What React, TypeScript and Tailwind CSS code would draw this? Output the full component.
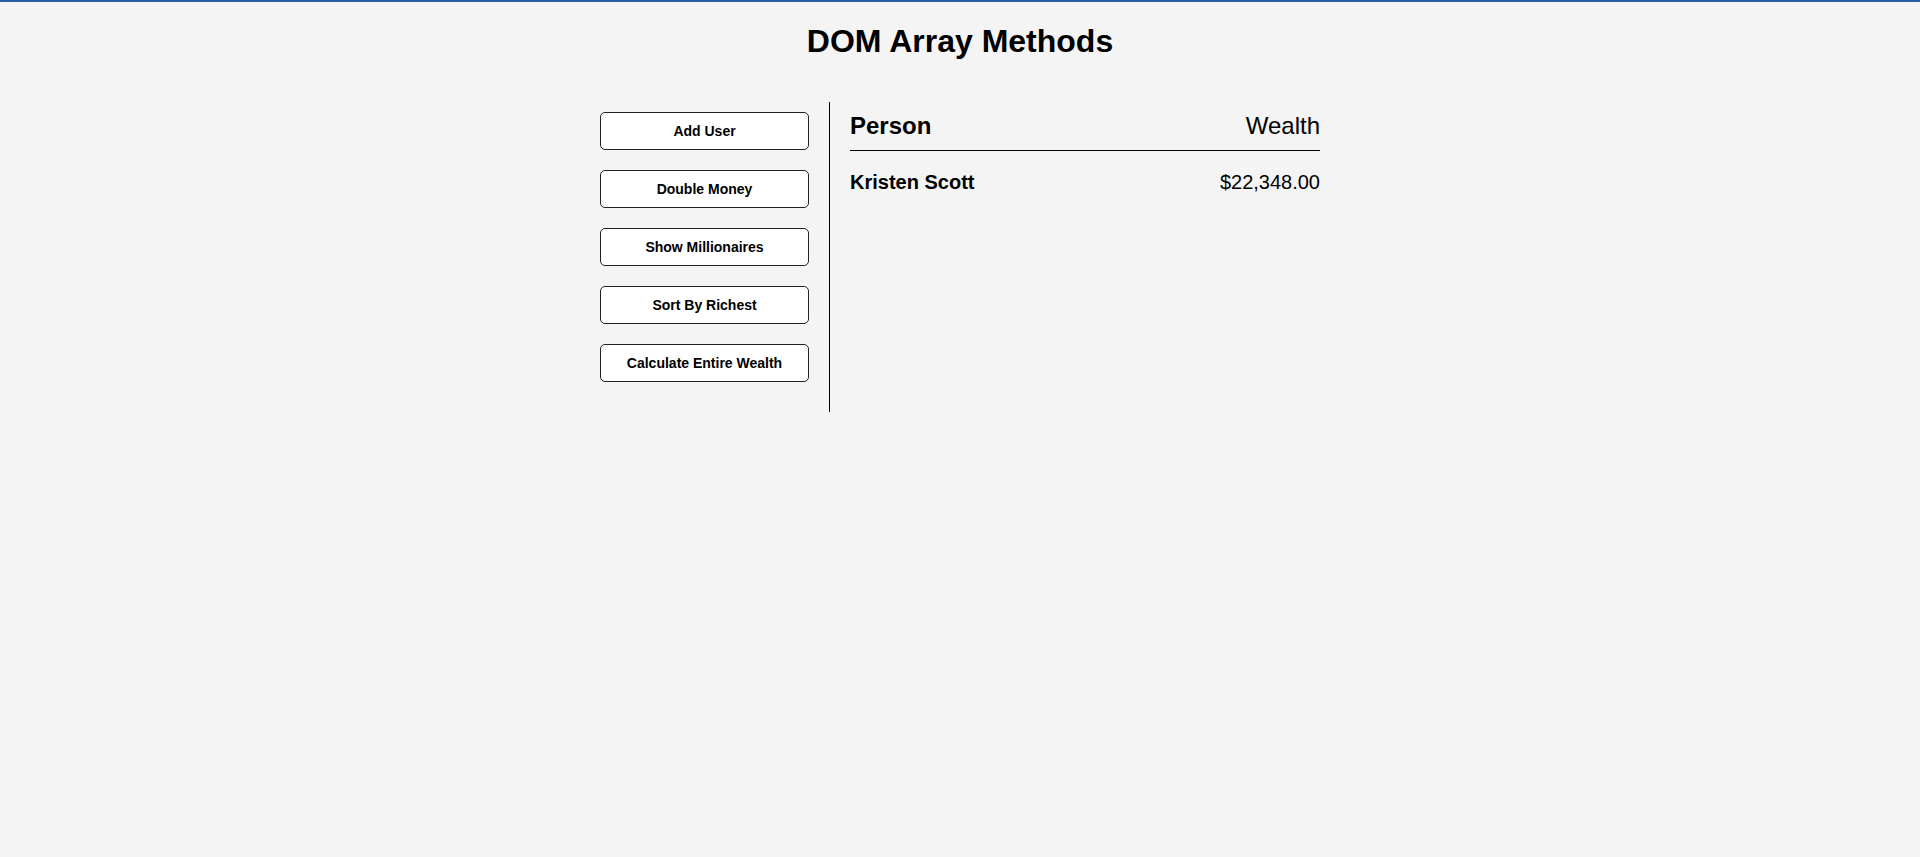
import React from "react";

const buttons = [
  "Add User",
  "Double Money",
  "Show Millionaires",
  "Sort By Richest",
  "Calculate Entire Wealth",
];

export default function App() {
  return (
    <div
      className="min-h-[857px] bg-[#f4f4f4] border-t-2 border-[#2b5ea7] text-black"
      style={{ fontFamily: '"Liberation Sans", Arial, sans-serif' }}
    >
      <h1 className="text-center text-[32px] leading-[36.8px] font-bold pt-[21.4px] m-0">
        DOM Array Methods
      </h1>
      <div className="flex w-[760px] mx-auto mt-[41.4px]">
        <aside className="w-[250px] shrink-0 border-r border-black px-5 pt-[10px] pb-[10px]">
          {buttons.map((b) => (
            <button
              key={b}
              className="block w-full h-[38px] mb-5 bg-white border border-[#222] rounded-[5px] text-[14px] font-bold leading-none text-black cursor-pointer"
            >
              {b}
            </button>
          ))}
        </aside>
        <main className="flex-1 px-5 pt-[10px]">
          <h2 className="flex justify-between text-[24px] leading-[27.6px] border-b border-black pb-[11px]">
            <strong className="font-bold">Person</strong>
            <span className="font-normal">Wealth</span>
          </h2>
          <div className="flex justify-between text-[20px] leading-[23px] mt-[20px]">
            <strong className="font-bold">Kristen Scott</strong>
            <span>$22,348.00</span>
          </div>
        </main>
      </div>
    </div>
  );
}
